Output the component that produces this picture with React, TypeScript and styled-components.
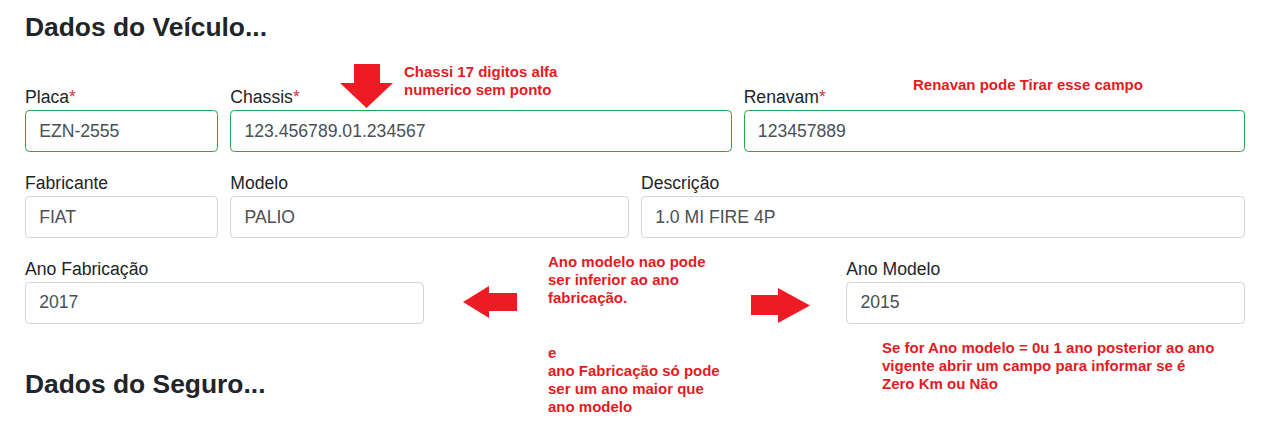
import React from "react";
import styled, { createGlobalStyle } from "styled-components";

const GlobalStyle = createGlobalStyle`
  html, body {
    margin: 0;
    padding: 0;
    background: #ffffff;
  }
  body {
    font-family: "Liberation Sans", Arial, sans-serif;
    color: #212529;
  }
  * { box-sizing: border-box; }
`;

const Page = styled.div`
  position: relative;
  width: 1265px;
  height: 423px;
  overflow: hidden;
  padding: 12px 20px 0 25px;
`;

const Title = styled.h4<{ $mt?: number; $mb?: number }>`
  margin: ${(p) => p.$mt ?? 0}px 0 ${(p) => p.$mb ?? 0}px 0;
  font-size: 26.4px;
  line-height: 1.2;
  font-weight: 700;
  color: #212529;
`;

const FormGrid = styled.div`
  display: grid;
  grid-template-columns: repeat(12, 1fr);
  column-gap: 12px;
  row-gap: 17.6px;
`;

const Field = styled.div<{ $span: number; $start?: number }>`
  grid-column: ${(p) => (p.$start ? `${p.$start} / span ${p.$span}` : `span ${p.$span}`)};
  display: flex;
  flex-direction: column;
`;

const Label = styled.label`
  font-size: 17.6px;
  line-height: 26.4px;
  color: #212529;
`;

const Required = styled.span`
  color: #dc3545;
`;

const Input = styled.input<{ $valid?: boolean }>`
  height: 41.8px;
  width: 100%;
  padding: 0 13.2px;
  font-family: "Liberation Sans", Arial, sans-serif;
  font-size: 17.6px;
  color: #495057;
  background: #fff;
  border: 1px solid ${(p) => (p.$valid ? "#28a745" : "#ced4da")};
  border-radius: 4.4px;
  outline: none;
`;

const Note = styled.div<{ $top: number; $left: number }>`
  position: absolute;
  top: ${(p) => p.$top}px;
  left: ${(p) => p.$left}px;
  font-family: "Liberation Sans", Arial, sans-serif;
  font-weight: 700;
  font-size: 15px;
  line-height: 18px;
  color: #e31b23;
  white-space: pre;
`;

const ArrowSvg = styled.svg<{ $top: number; $left: number }>`
  position: absolute;
  top: ${(p) => p.$top}px;
  left: ${(p) => p.$left}px;
  display: block;
`;

const RED = "#ed1c24";

const DownArrow = () => (
  <ArrowSvg $top={63} $left={340} width={53} height={45} viewBox="0 0 53 45">
    <polygon points="14,1 40,1 40,20 53,20 26.5,45 0,20 14,20" fill={RED} />
  </ArrowSvg>
);

const LeftArrow = () => (
  <ArrowSvg $top={286} $left={463} width={54} height={32} viewBox="0 0 54 32">
    <polygon points="0,16 26,0 26,7 54,7 54,25 26,25 26,32" fill={RED} />
  </ArrowSvg>
);

const RightArrow = () => (
  <ArrowSvg $top={288} $left={751} width={59} height={35} viewBox="0 0 59 35">
    <polygon points="0,7 27,7 27,0 59,17.5 27,35 27,27 0,27" fill={RED} />
  </ArrowSvg>
);

export default function App() {
  return (
    <>
      <GlobalStyle />
      <Page>
        <Title $mb={40.3}>Dados do Veículo...</Title>
        <FormGrid>
          <Field $span={2}>
            <Label>
              Placa<Required>*</Required>
            </Label>
            <Input $valid defaultValue="EZN-2555" />
          </Field>
          <Field $span={5}>
            <Label>
              Chassis<Required>*</Required>
            </Label>
            <Input $valid defaultValue="123.456789.01.234567" />
          </Field>
          <Field $span={5}>
            <Label>
              Renavam<Required>*</Required>
            </Label>
            <Input $valid defaultValue="123457889" />
          </Field>

          <Field $span={2}>
            <Label>Fabricante</Label>
            <Input defaultValue="FIAT" />
          </Field>
          <Field $span={4}>
            <Label>Modelo</Label>
            <Input defaultValue="PALIO" />
          </Field>
          <Field $span={6}>
            <Label>Descrição</Label>
            <Input defaultValue="1.0 MI FIRE 4P" />
          </Field>

          <Field $span={4} $start={1}>
            <Label>Ano Fabricação</Label>
            <Input defaultValue="2017" />
          </Field>
          <Field $span={4} $start={9}>
            <Label>Ano Modelo</Label>
            <Input defaultValue="2015" />
          </Field>
        </FormGrid>
        <Title $mt={45}>Dados do Seguro...</Title>

        <DownArrow />
        <Note $top={63} $left={404}>{"Chassi 17 digitos alfa\nnumerico sem ponto"}</Note>
        <Note $top={76} $left={913}>Renavan pode Tirar esse campo</Note>
        <LeftArrow />
        <RightArrow />
        <Note $top={253} $left={548}>
          {"Ano modelo nao pode\nser inferior ao ano\nfabricação."}
        </Note>
        <Note $top={344} $left={548}>
          {"e\nano Fabricação só pode\nser um ano maior que\nano modelo"}
        </Note>
        <Note $top={339} $left={882}>
          {"Se for Ano modelo = 0u 1 ano posterior ao ano\nvigente abrir um campo para informar se é\nZero Km ou Não"}
        </Note>
      </Page>
    </>
  );
}
